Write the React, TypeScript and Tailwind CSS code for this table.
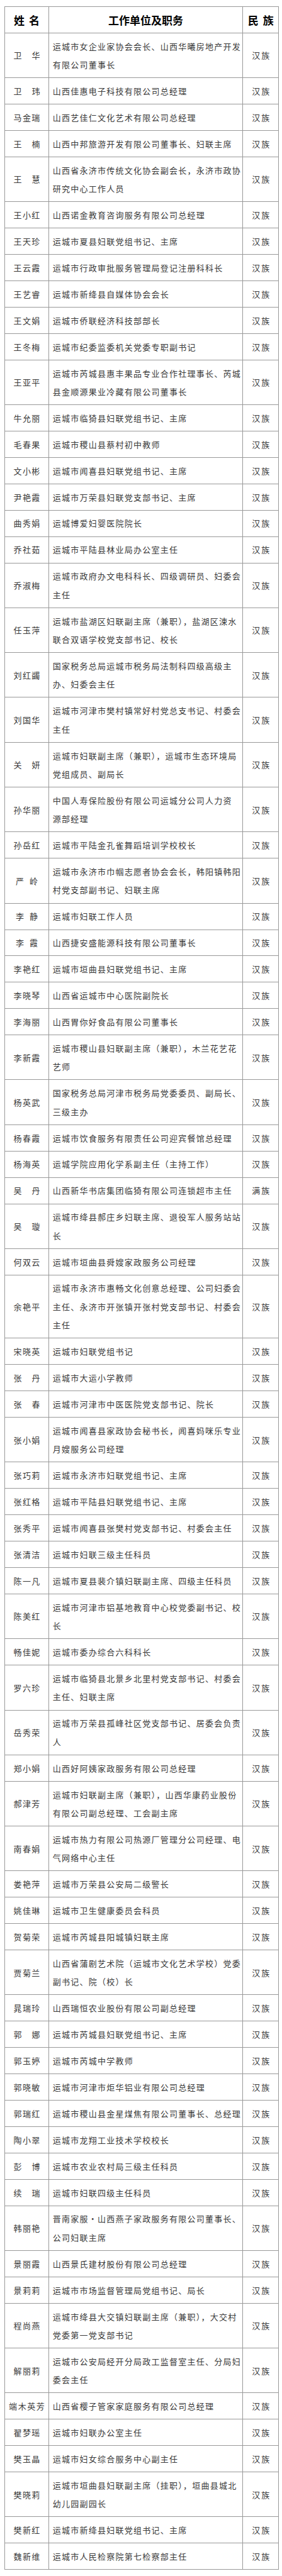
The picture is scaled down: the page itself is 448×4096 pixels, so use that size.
import React from 'react';

type Entry = { name: string; lines: string[]; eth?: string; narrow?: boolean };

const ROWS: Entry[] = [
  { name: '卫华', lines: ['运城市女企业家协会会长、山西华曦房地产开发', '有限公司董事长'] },
  { name: '卫玮', lines: ['山西佳惠电子科技有限公司总经理'] },
  { name: '马金瑞', lines: ['山西艺佳仁文化艺术有限公司总经理'] },
  { name: '王楠', lines: ['山西中邦旅游开发有限公司董事长、妇联主席'] },
  { name: '王慧', lines: ['山西省永济市传统文化协会副会长，永济市政协', '研究中心工作人员'] },
  { name: '王小红', lines: ['山西诺金教育咨询服务有限公司总经理'] },
  { name: '王天珍', lines: ['运城市夏县妇联党组书记、主席'] },
  { name: '王云霞', lines: ['运城市行政审批服务管理局登记注册科科长'] },
  { name: '王艺睿', lines: ['运城市新绛县自媒体协会会长'] },
  { name: '王文娟', lines: ['运城市侨联经济科技部部长'] },
  { name: '王冬梅', lines: ['运城市纪委监委机关党委专职副书记'] },
  { name: '王亚平', lines: ['运城市芮城县惠丰果品专业合作社理事长、芮城', '县金顺源果业冷藏有限公司董事长'] },
  { name: '牛允丽', lines: ['运城市临猗县妇联党组书记、主席'] },
  { name: '毛春果', lines: ['运城市稷山县蔡村初中教师'] },
  { name: '文小彬', lines: ['运城市闻喜县妇联党组书记、主席'] },
  { name: '尹艳霞', lines: ['运城市万荣县妇联党支部书记、主席'] },
  { name: '曲秀娟', lines: ['运城博爱妇婴医院院长'] },
  { name: '乔社茹', lines: ['运城市平陆县林业局办公室主任'] },
  { name: '乔淑梅', lines: ['运城市政府办文电科科长、四级调研员、妇委会', '主任'] },
  { name: '任玉萍', lines: ['运城市盐湖区妇联副主席（兼职），盐湖区涑水', '联合双语学校党支部书记、校长'] },
  { name: '刘红蠲', lines: ['国家税务总局运城市税务局法制科四级高级主', '办、妇委会主任'] },
  { name: '刘国华', lines: ['运城市河津市樊村镇常好村党总支书记、村委会', '主任'] },
  { name: '关妍', lines: ['运城市妇联副主席（兼职），运城市生态环境局', '党组成员、副局长'] },
  { name: '孙华丽', lines: ['中国人寿保险股份有限公司运城分公司人力资', '源部经理'] },
  { name: '孙岳红', lines: ['运城市平陆金孔雀舞蹈培训学校校长'] },
  { name: '严岭', narrow: true, lines: ['运城市永济市巾帼志愿者协会会长，韩阳镇韩阳', '村党支部副书记、妇联主席'] },
  { name: '李静', narrow: true, lines: ['运城市妇联工作人员'] },
  { name: '李霞', narrow: true, lines: ['山西捷安盛能源科技有限公司董事长'] },
  { name: '李艳红', lines: ['运城市垣曲县妇联党组书记、主席'] },
  { name: '李晓琴', lines: ['山西省运城市中心医院副院长'] },
  { name: '李海丽', lines: ['山西胃你好食品有限公司董事长'] },
  { name: '李新霞', lines: ['运城市稷山县妇联副主席（兼职），木兰花艺花', '艺师'] },
  { name: '杨英武', lines: ['国家税务总局河津市税务局党委委员、副局长、', '三级主办'] },
  { name: '杨春霞', lines: ['运城市饮食服务有限责任公司迎宾餐馆总经理'] },
  { name: '杨海英', lines: ['运城学院应用化学系副主任（主持工作）'] },
  { name: '吴丹', eth: '满族', lines: ['山西新华书店集团临猗有限公司连锁超市主任'] },
  { name: '吴璇', lines: ['运城市绛县郝庄乡妇联主席、退役军人服务站站', '长'] },
  { name: '何双云', lines: ['运城市垣曲县舜嫂家政服务公司经理'] },
  { name: '余艳平', lines: ['运城市永济市惠畅文化创意总经理、公司妇委会', '主任、永济市开张镇开张村党支部书记、村委会', '主任'] },
  { name: '宋晓英', lines: ['运城市妇联党组书记'] },
  { name: '张丹', lines: ['运城市大运小学教师'] },
  { name: '张春', lines: ['运城市河津市中医医院党支部书记、院长'] },
  { name: '张小娟', lines: ['运城市闻喜县家政协会秘书长，闻喜妈咪乐专业', '月嫂服务公司经理'] },
  { name: '张巧莉', lines: ['运城市永济市妇联党组书记、主席'] },
  { name: '张红格', lines: ['运城市平陆县妇联党组书记、主席'] },
  { name: '张秀平', lines: ['运城市闻喜县张樊村党支部书记、村委会主任'] },
  { name: '张清洁', lines: ['运城市妇联三级主任科员'] },
  { name: '陈一凡', lines: ['运城市夏县裴介镇妇联副主席、四级主任科员'] },
  { name: '陈美红', lines: ['运城市河津市铝基地教育中心校党委副书记、校', '长'] },
  { name: '畅佳妮', lines: ['运城市委办综合六科科长'] },
  { name: '罗六珍', lines: ['运城市临猗县北景乡北里村党支部书记、村委会', '主任、妇联主席'] },
  { name: '岳秀荣', lines: ['运城市万荣县孤峰社区党支部书记、居委会负责', '人'] },
  { name: '郑小娟', lines: ['山西好阿姨家政服务有限公司总经理'] },
  { name: '郝津芳', lines: ['运城市妇联副主席（兼职），山西华康药业股份', '有限公司副总经理、工会副主席'] },
  { name: '南春娟', lines: ['运城市热力有限公司热源厂管理分公司经理、电', '气网络中心主任'] },
  { name: '娄艳萍', lines: ['运城市万荣县公安局二级警长'] },
  { name: '姚佳琳', lines: ['运城市卫生健康委员会科员'] },
  { name: '贺菊荣', lines: ['运城市芮城县阳城镇妇联主席'] },
  { name: '贾菊兰', lines: ['山西省蒲剧艺术院（运城市文化艺术学校）党委', '副书记、院（校）长'] },
  { name: '晁瑞玲', lines: ['山西瑞恒农业股份有限公司副总经理'] },
  { name: '郭娜', lines: ['运城市芮城县妇联党组书记、主席'] },
  { name: '郭玉婷', lines: ['运城市芮城中学教师'] },
  { name: '郭晓敏', lines: ['运城市河津市炬华铝业有限公司总经理'] },
  { name: '郭瑞红', lines: ['运城市稷山县金星煤焦有限公司董事长、总经理'] },
  { name: '陶小翠', lines: ['运城市龙翔工业技术学校校长'] },
  { name: '彭博', lines: ['运城市农业农村局三级主任科员'] },
  { name: '续瑞', lines: ['运城市妇联四级主任科员'] },
  { name: '韩丽艳', lines: ['晋南家服・山西燕子家政服务有限公司董事长、', '公司妇联主席'] },
  { name: '景丽霞', lines: ['山西景氏建材股份有限公司总经理'] },
  { name: '景莉莉', lines: ['运城市市场监督管理局党组书记、局长'] },
  { name: '程尚燕', lines: ['运城市绛县大交镇妇联副主席（兼职），大交村', '党委第一党支部书记'] },
  { name: '解丽莉', lines: ['运城市公安局经开分局政工监督室主任、分局妇', '委会主任'] },
  { name: '端木英芳', lines: ['山西省樱子管家家庭服务有限公司总经理'] },
  { name: '翟梦瑶', lines: ['运城市妇联办公室主任'] },
  { name: '樊玉晶', lines: ['运城市妇女综合服务中心副主任'] },
  { name: '樊晓莉', lines: ['运城市垣曲县妇联副主席（挂职），垣曲县城北', '幼儿园副园长'] },
  { name: '樊新红', lines: ['运城市新绛县妇联党组书记、主席'] },
  { name: '魏新维', lines: ['运城市人民检察院第七检察部主任'] },
];

function Name({ entry }: { entry: Entry }) {
  const chars = Array.from(entry.name);
  if (chars.length === 4) {
    return <div className="flex gap-[1.5px]">{chars.map((c, i) => <span key={i}>{c}</span>)}</div>;
  }
  if (entry.narrow) {
    return <div className="flex gap-[9px]">{chars.map((c, i) => <span key={i}>{c}</span>)}</div>;
  }
  return (
    <div className="flex w-[42px] justify-between">
      {chars.map((c, i) => <span key={i}>{c}</span>)}
    </div>
  );
}

function Row({ entry }: { entry: Entry }) {
  return (
    <div className="grid grid-cols-[68.8px_308.5px_1fr] border-t border-[#999]">
      <div className="flex items-center justify-center">
        <Name entry={entry} />
      </div>
      <div className="whitespace-nowrap border-l border-[#999] py-[5.75px] pl-[6px] tracking-[1.25px]">
        {entry.lines.map((l, i) => <div key={i}>{l}</div>)}
      </div>
      <div className="flex items-center justify-center border-l border-[#999] pl-[2px] tracking-[2px]">
        {entry.eth ?? '汉族'}
      </div>
    </div>
  );
}

export default function App() {
  return (
    <div className="min-h-screen bg-white pt-[10px] pl-[7px] text-[13px] leading-[29.4px] text-[#3a3a3a] [font-family:'Noto_Sans_CJK_SC','Noto_Sans',sans-serif]">
      <div className="w-[436px] border border-[#999]">
        <div className="grid h-[41px] grid-cols-[68.8px_308.5px_1fr] text-[17px] font-bold text-black">
          <div className="flex items-center justify-center gap-[7px]"><span>姓</span><span>名</span></div>
          <div className="flex items-center justify-center border-l border-[#999]">工作单位及职务</div>
          <div className="flex items-center justify-center gap-[7px] border-l border-[#999]"><span>民</span><span>族</span></div>
        </div>
        {ROWS.map((r) => <Row key={r.name} entry={r} />)}
      </div>
    </div>
  );
}
